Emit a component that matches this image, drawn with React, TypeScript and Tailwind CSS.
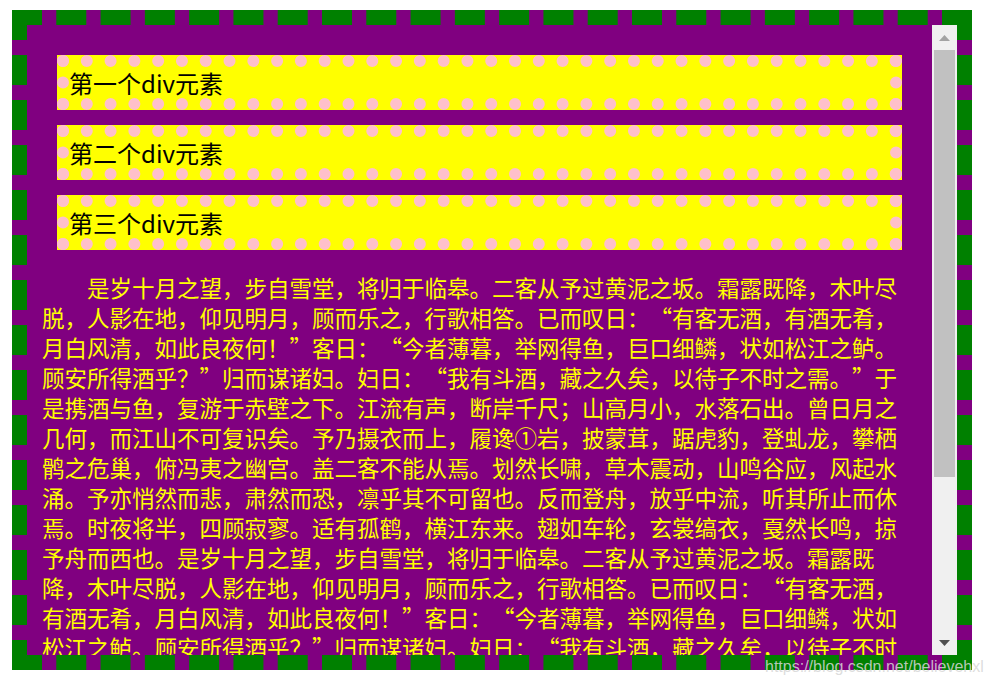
const lines = [
  '是岁十月之望，步自雪堂，将归于临皋。二客从予过黄泥之坂。霜露既降，木叶尽',
  '脱，人影在地，仰见明月，顾而乐之，行歌相答。已而叹日：“有客无酒，有酒无肴，',
  '月白风清，如此良夜何！”客日：“今者薄暮，举网得鱼，巨口细鳞，状如松江之鲈。',
  '顾安所得酒乎？”归而谋诸妇。妇日：“我有斗酒，藏之久矣，以待子不时之需。”于',
  '是携酒与鱼，复游于赤壁之下。江流有声，断岸千尺；山高月小，水落石出。曾日月之',
  '几何，而江山不可复识矣。予乃摄衣而上，履谗①岩，披蒙茸，踞虎豹，登虬龙，攀栖',
  '鹘之危巢，俯冯夷之幽宫。盖二客不能从焉。划然长啸，草木震动，山鸣谷应，风起水',
  '涌。予亦悄然而悲，肃然而恐，凛乎其不可留也。反而登舟，放乎中流，听其所止而休',
  '焉。时夜将半，四顾寂寥。适有孤鹤，横江东来。翅如车轮，玄裳缟衣，戛然长鸣，掠',
  '予舟而西也。是岁十月之望，步自雪堂，将归于临皋。二客从予过黄泥之坂。霜露既',
  '降，木叶尽脱，人影在地，仰见明月，顾而乐之，行歌相答。已而叹日：“有客无酒，',
  '有酒无肴，月白风清，如此良夜何！”客日：“今者薄暮，举网得鱼，巨口细鳞，状如',
  '松江之鲈。顾安所得酒乎？”归而谋诸妇。妇日：“我有斗酒，藏之久矣，以待子不时',
  '之需。”于是携酒与鱼，复游于赤壁之下。江流有声，断岸千尺；山高月小，水落石',
  '出。曾日月之几何，而江山不可复识矣。',
];

const boxes = ['第一个div元素', '第二个div元素', '第三个div元素'];

// quotes get a full-width cell like the CJK punctuation around them
function Line({ text }: { text: string }) {
  const parts = text.split(/([“”])/);
  return (
    <>
      {parts.map((p, i) =>
        p === '“' ? (
          <span key={i} className="inline-block w-[1em] text-right">
            “
          </span>
        ) : p === '”' ? (
          <span key={i} className="inline-block w-[1em] text-left">
            ”
          </span>
        ) : (
          p
        )
      )}
    </>
  );
}

function ScrollBar() {
  return (
    <div className="flex w-[25px] shrink-0 flex-col bg-[#f0f0f0]">
      <div className="flex h-[25px] items-center justify-center">
        <svg width="11" height="6" viewBox="0 0 11 6">
          <path d="M5.5 0 L11 6 L0 6 Z" fill="#a3a3a3" />
        </svg>
      </div>
      <div className="flex-1 px-[2px]">
        <div className="h-[427px] bg-[#c1c1c1]" />
      </div>
      <div className="flex h-[25px] items-center justify-center">
        <svg width="11" height="6" viewBox="0 0 11 6">
          <path d="M0 0 L11 0 L5.5 6 Z" fill="#505050" />
        </svg>
      </div>
    </div>
  );
}

export default function App() {
  return (
    <div className="relative h-[685px] w-[991px] overflow-hidden bg-white pl-[12px] pt-[10px] font-['Noto_Sans_CJK_SC',sans-serif]">
      <div className="flex h-[660px] w-[960px] border-[15px] border-dashed border-[#008000] bg-[#800080]">
        <div className="min-h-0 flex-1 overflow-hidden">
          <div className="flex flex-col gap-[15px] px-[30px] pt-[30px]">
            {boxes.map((t) => (
              <div
                key={t}
                className="h-[55px] border-[12px] border-dotted border-[#ffc0cb] bg-[#ffff00] text-[24px] leading-[31px] text-black"
              >
                {t}
              </div>
            ))}
          </div>
          <p
            lang="zh-CN"
            className="mx-[15px] mt-[22px] whitespace-nowrap text-[22.5px] leading-[30px] text-[#ffff00]"
          >
            {lines.map((l, i) => (
              <span key={i} className={i === 0 ? 'block pl-[45px]' : 'block'}>
                <Line text={l} />
              </span>
            ))}
          </p>
        </div>
        <ScrollBar />
      </div>
      <div className="absolute left-[765px] top-[655px] font-['Liberation_Sans',sans-serif] text-[16px] text-[rgba(215,215,215,0.85)]">
        https://blog.csdn.net/believehxl
      </div>
    </div>
  );
}
